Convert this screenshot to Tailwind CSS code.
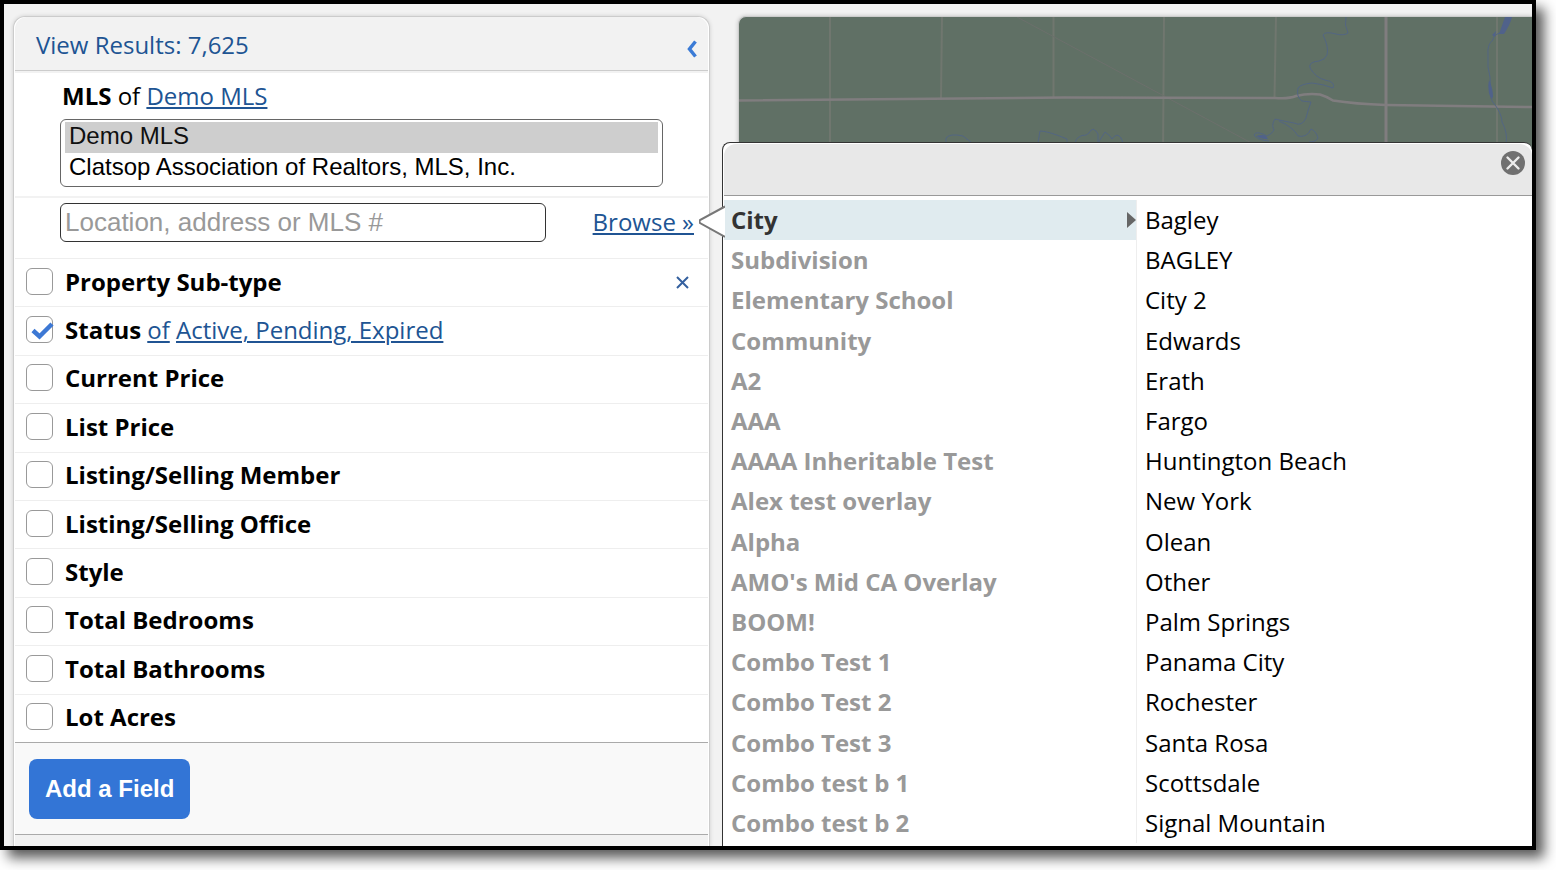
<!DOCTYPE html>
<html lang="en">
<head>
<meta charset="utf-8">
<title>MLS Search</title>
<script src="https://cdn.jsdelivr.net/npm/@tailwindcss/browser@4"></script>
</head>
<body class="h-screen overflow-hidden bg-white pr-5 pb-5 font-['Open_Sans','Noto_Sans',sans-serif] text-2xl text-black">
<div class="relative h-full border-4 border-black bg-[#f2f2f2] shadow-[8px_8px_12px_rgba(0,0,0,0.65)]">
<div class="flex h-full gap-7 overflow-hidden pt-3 pl-[9px]">

  <aside class="flex w-[697px] shrink-0 flex-col overflow-hidden rounded-t-xl border border-b-0 border-[#cccccc] bg-white px-px shadow-[0_0_4px_rgba(0,0,0,0.15)]">
    <header class="flex h-[54px] shrink-0 items-center justify-between rounded-t-xl border-b border-[#cccccc] bg-[#f2f2f2] pt-[2px] pr-[11px] pl-[21px]">
      <a href="#" class="text-[#205493]">View Results: 7,625</a>
      <button type="button" aria-label="Collapse panel" class="mt-2">
        <svg class="h-[18px] w-[10px]" viewBox="0 0 10 18" fill="none" stroke="#3b7bd6" stroke-width="3.500"><path d="M8.500 1.500L2.500 9l6 7.500"/></svg>
      </button>
    </header>

    <section class="h-[127px] shrink-0 border-y-2 border-[#f2f2f2] bg-white pt-[7px] pl-[45px]">
      <label for="mls" class="block pl-[2px] leading-8"><b>MLS</b> of <a href="#" class="text-[#205493] underline decoration-2 underline-offset-2">Demo MLS</a></label>
      <select id="mls" multiple size="2" class="mt-[7px] h-[68px] w-[603px] overflow-hidden rounded-md border border-[#666] bg-white px-1 py-[2px] font-['Liberation_Sans',Arial,sans-serif] text-2xl">
        <option selected class="h-[31px] px-1 py-0 leading-[28px]">Demo MLS</option>
        <option class="h-[31px] px-1 py-0 leading-[30px]">Clatsop Association of Realtors, MLS, Inc.</option>
      </select>
    </section>

    <section class="flex h-[60px] shrink-0 items-start justify-between bg-white pt-[5px] pr-[14px] pl-[45px]">
      <input type="text" aria-label="Location" placeholder="Location, address or MLS #" class="h-[39px] w-[486px] rounded-md border border-[#333] bg-white px-1 font-['Liberation_Sans',Arial,sans-serif] text-[26px] placeholder:text-[#999]">
      <a href="#" class="text-[#205493] underline decoration-2 underline-offset-2 leading-[37px]">Browse »</a>
    </section>

    <ul id="fields" class="grid h-[485px] shrink-0 auto-rows-fr border-b border-[#aaa] bg-white"></ul>

    <div class="flex h-[92px] shrink-0 items-center border-b border-[#aaa] bg-[#f9f9f9] pl-[14px]">
      <button type="button" class="h-[60px] rounded-lg bg-[#3375d6] px-4 font-['Liberation_Sans',Arial,sans-serif] text-2xl font-bold text-white">Add a Field</button>
    </div>
    <div class="flex-1 bg-[#f2f2f2]"></div>
  </aside>

  <main class="h-40 min-w-0 flex-1 overflow-hidden rounded-tl-lg border-t border-l border-[#ccc] bg-[#607065] shadow-[0_0_4px_rgba(0,0,0,0.2)]">
    <svg class="h-[140px] w-full" viewBox="739 17 793 140" preserveAspectRatio="xMinYMin slice" fill="none" aria-label="Map">
      <g stroke="#70776f" stroke-width="2">
        <path d="M830 17V157M942 17L941 98M1053.500 17V97M1164 17L1163 157M1276 17L1274.500 97M1497 17V157"/>
        <path d="M1017 17L1257 146" stroke="#6c706c" stroke-width="1"/>
      </g>
      <g stroke="#807d7f">
        <path d="M739 100.500L1064 97.500 1275 98Q1289 99 1296 96Q1308 93 1320 94.500Q1328 97 1333 100.500Q1355 104 1386 105L1532 107" stroke-width="2.500"/>
        <path d="M1386 17V157" stroke-width="3"/>
      </g>
      <g stroke="#536683" stroke-width="1" stroke-linejoin="round">
        <path d="M1346 17Q1344 25 1348 33Q1344 36 1336 34Q1325 31 1323 35Q1329 47 1327 55Q1325 60 1319 61Q1308 62 1310 68Q1316 78 1325 80Q1336 82 1333 88Q1323 84 1312 83Q1301 84 1298 88Q1296 97 1302 101L1311 102Q1308 110 1306 118Q1302 127 1294 123Q1283 121 1275 119Q1271 125 1274 130Q1272 134 1267 136Q1256 130 1254 135Q1257 140 1269 141M1279 121Q1293 127 1298 136Q1307 138 1311 129Q1316 131 1318 138Q1316 142 1309 142"/>
        <path d="M946 143V138Q950 133 963 136L972 143M1038 143L1040 131Q1048 131 1067 139V143M1075 143Q1077 135 1086 135L1089 133Q1093 125 1098 134V143L1105 132Q1110 135 1112 139Q1117 132 1121 138L1123 143"/>
        <path d="M1500 33Q1493 35 1493 40Q1487 44 1488 55Q1487 68 1490 77Q1490 91 1492 101Q1502 113 1502 122Q1508 133 1506 144"/>
      </g>
      <g fill="#50628a"><path d="M1505 17h7q-2 8-8 17h-5zM1489 80q4 8 4 17l-2 2q-4-8-2-19zM1256 136q6-2 10 0l2 3q-6 1-12-3zM1492 35l4-4-1 6z"/></g>
    </svg>
  </main>
</div>

<section aria-label="Browse locations" class="absolute top-[138px] right-0 bottom-0 left-[718px] flex flex-col rounded-t-lg border-t border-l border-[#333] bg-white">
  <svg class="absolute top-[60px] -left-[24px] h-[38px] w-[26px]" viewBox="0 0 26 38" fill="white" stroke="#777" stroke-width="2"><path d="M26 3.500L1 17Q0 18.500 1 20L26 34" /></svg>
  <header class="mt-px ml-px flex h-[52px] shrink-0 items-start justify-end rounded-t-xl border-b border-[#999] bg-[#e8e8e8] pt-[7px] pr-[7px]">
    <button type="button" aria-label="Close">
      <svg class="size-6" viewBox="0 0 24 24"><circle cx="12" cy="12" r="12" fill="#707070"/><path d="M6.500 6.500l11 11m0-11l-11 11" stroke="#ececec" stroke-width="2.400" stroke-linecap="round"/></svg>
    </button>
  </header>
  <div class="mt-1 ml-px grid h-[643px] grid-cols-[413px_1fr]">
    <ul id="categories" class="grid auto-rows-fr border-r border-[#eee]"></ul>
    <ul id="cities" class="grid auto-rows-fr"></ul>
  </div>
</section>
</div>

<script>
const link = 'text-[#205493] underline decoration-2 underline-offset-2';
const fields = ['Property Sub-type','Status','Current Price','List Price','Listing/Selling Member','Listing/Selling Office','Style','Total Bedrooms','Total Bathrooms','Lot Acres'];
document.getElementById('fields').innerHTML = fields.map((f, i) => `
  <li class="flex items-center border-t border-[#eee] pr-[18px] pb-[2px] pl-[11px]">
    <span class="grid size-7 shrink-0">
      <input id="f${i}" type="checkbox" ${i === 1 ? 'checked' : ''} class="col-start-1 row-start-1 size-[27px] appearance-none rounded-md border border-[#999] bg-white">
      ${i === 1 ? '<svg class="pointer-events-none col-start-1 row-start-1 size-7" viewBox="0 0 28 28" fill="none"><path d="M7 14.500l6.500 6L26 8" stroke="#3d78d4" stroke-width="4.500"/></svg>' : ''}
    </span>
    <label for="f${i}" class="ml-[11px] font-bold">${f}</label>
    ${i === 1 ? `<span class="ml-[6px]"><a href="#" class="${link}">of</a> <a href="#" class="${link}">Active, Pending, Expired</a></span>` : ''}
    ${i === 0 ? '<button type="button" aria-label="Remove field" class="ml-auto"><svg class="size-[15px]" viewBox="0 0 15 15" fill="none" stroke="#34609f" stroke-width="2"><path d="M2 3l11 11M13 3L2 14"/></svg></button>' : ''}
  </li>`).join('');

const categories = ['City','Subdivision','Elementary School','Community','A2','AAA','AAAA Inheritable Test','Alex test overlay','Alpha',"AMO's Mid CA Overlay",'BOOM!','Combo Test 1','Combo Test 2','Combo Test 3','Combo test b 1','Combo test b 2'];
document.getElementById('categories').innerHTML = categories.map((c, i) => `
  <li class="flex"><button type="button" class="flex w-full items-center justify-between pl-[7px] text-left font-bold ${i ? 'text-[#999]' : 'bg-[#e0ebef] text-[#333]'}">${c}${i ? '' : '<svg class="h-4 w-[9px]" viewBox="0 0 9 16" fill="#666"><path d="M0 0l9 8-9 8z"/></svg>'}</button></li>`).join('');

const cities = ['Bagley','BAGLEY','City 2','Edwards','Erath','Fargo','Huntington Beach','New York','Olean','Other','Palm Springs','Panama City','Rochester','Santa Rosa','Scottsdale','Signal Mountain'];
document.getElementById('cities').innerHTML = cities.map(c => `
  <li class="flex"><button type="button" class="w-full pl-2 text-left">${c}</button></li>`).join('');
</script>
</body>
</html>
